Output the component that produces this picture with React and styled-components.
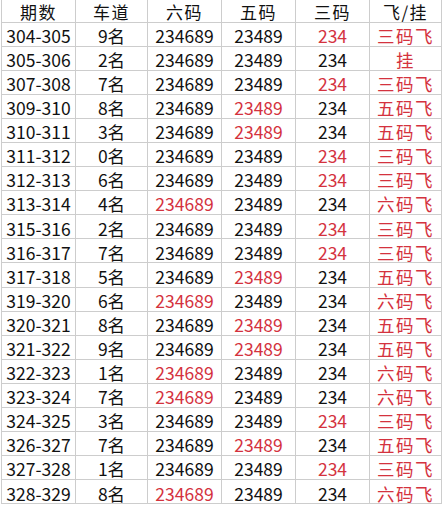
import React from "react";
import styled, { createGlobalStyle } from "styled-components";

const Global = createGlobalStyle`
  html, body { margin: 0; padding: 0; background: #ffffff; }
  body { font-family: "Noto Sans CJK SC", "Noto Sans", sans-serif; }
`;

const Table = styled.div`
  display: grid;
  grid-template-columns: 74px 72px 74px 74px 74px 72px;
  width: 441px;
  margin-left: 1px;
  border-left: 1px solid #cdcdcd;
  box-sizing: border-box;
`;

const Cell = styled.div`
  box-sizing: border-box;
  height: ${(p) => (p.$head ? "22.5px" : "24.1px")};
  border-right: 1px solid #cdcdcd;
  border-bottom: 1px solid #cdcdcd;
  display: flex;
  align-items: center;
  justify-content: center;
  font-family: ${(p) =>
    p.$cjk
      ? '"Noto Sans CJK SC", sans-serif'
      : '"Noto Sans CJK SC", "Noto Sans", sans-serif'};
  font-size: ${(p) => (p.$head ? "17px" : "17.5px")};
  line-height: 1;
  font-weight: 400;
  color: ${(p) => (p.$red ? "#d4323e" : "#111111")};
  letter-spacing: ${(p) => (p.$cjk ? "1.5px" : "0")};
  white-space: nowrap;
  padding-top: ${(p) => (p.$head ? "1px" : "3px")};
`;

const heads = ["期数", "车道", "六码", "五码", "三码", "飞/挂"];

// which: 3 = 三码 red, 5 = 五码 red, 6 = 六码 red, 0 = 挂
const rows = [
  ["304-305", "9", 3],
  ["305-306", "2", 0],
  ["307-308", "7", 3],
  ["309-310", "8", 5],
  ["310-311", "3", 5],
  ["311-312", "0", 3],
  ["312-313", "6", 3],
  ["313-314", "4", 6],
  ["315-316", "2", 3],
  ["316-317", "7", 3],
  ["317-318", "5", 5],
  ["319-320", "6", 6],
  ["320-321", "8", 5],
  ["321-322", "9", 5],
  ["322-323", "1", 6],
  ["323-324", "7", 6],
  ["324-325", "3", 3],
  ["326-327", "7", 5],
  ["327-328", "1", 3],
  ["328-329", "8", 6],
];

const result = { 3: "三码飞", 5: "五码飞", 6: "六码飞", 0: "挂" };

export default function App() {
  return (
    <>
      <Global />
      <Table>
        {heads.map((h) => (
          <Cell key={h} $head $cjk>
            {h}
          </Cell>
        ))}
        {rows.map(([period, lane, w]) => (
          <React.Fragment key={period}>
            <Cell>{period}</Cell>
            <Cell>{lane}名</Cell>
            <Cell $red={w === 6}>234689</Cell>
            <Cell $red={w === 5}>23489</Cell>
            <Cell $red={w === 3}>234</Cell>
            <Cell $red $cjk>
              {result[w]}
            </Cell>
          </React.Fragment>
        ))}
      </Table>
    </>
  );
}
